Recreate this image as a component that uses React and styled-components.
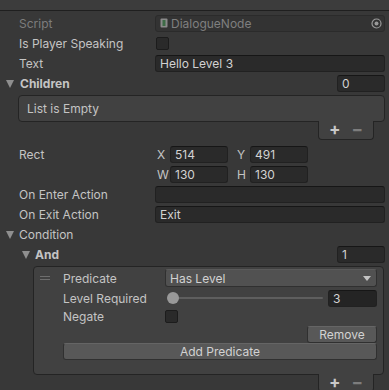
import React from 'react';
import styled, { createGlobalStyle } from 'styled-components';

const Global = createGlobalStyle`
  html, body { margin: 0; padding: 0; background: #383838; }
`;

const Page = styled.div`
  width: 389px;
  height: 390px;
  overflow: hidden;
  background: #383838;
  font-family: Inter, "Noto Sans", sans-serif;
  font-size: 12px;
  color: #c4c4c4;
`;

const TopBar = styled.div`
  height: 10px;
  background: #3c3c3c;
  border-bottom: 1px solid #1f1f1f;
`;

const Body = styled.div`
  display: flex;
  flex-direction: column;
  padding: 0 4px 0 0;
`;

const Row = styled.div`
  display: flex;
  align-items: center;
  height: 18px;
  margin-top: ${p => p.$mt ?? 2}px;
  flex: none;
`;

const Label = styled.div`
  position: relative;
  box-sizing: border-box;
  flex: none;
  width: ${p => p.$w ?? 155}px;
  padding-left: ${p => p.$indent ?? 19}px;
  color: ${p => (p.$dim ? '#7d7d7d' : '#c4c4c4')};
  font-weight: ${p => (p.$bold ? 700 : 400)};
  white-space: nowrap;
`;

const Arrow = styled.span`
  position: absolute;
  left: ${p => p.$left}px;
  top: 4px;
  width: 0;
  height: 0;
  border-left: 4px solid transparent;
  border-right: 4px solid transparent;
  border-top: 8px solid #8f8f8f;
`;

const Field = styled.div`
  box-sizing: border-box;
  flex: ${p => (p.$w ? 'none' : 1)};
  width: ${p => (p.$w ? `${p.$w}px` : 'auto')};
  margin-left: ${p => p.$ml ?? 0}px;
  height: 17px;
  display: flex;
  align-items: center;
  gap: 3px;
  padding: 0 4px;
  background: ${p => (p.$dark ? '#242424' : '#2a2a2a')};
  border: 1px solid #212121;
  border-top-color: #161616;
  border-radius: 3px;
  color: #d2d2d2;
  white-space: nowrap;
`;

const ObjectField = styled(Field)`
  background: #333333;
  border-color: #2b2b2b;
  color: #7f7f7f;
  padding-right: 2px;
`;

const Spacer = styled.div`
  flex: 1;
`;

const Check = styled.div`
  width: 13px;
  height: 13px;
  box-sizing: border-box;
  margin-left: ${p => p.$ml ?? 1}px;
  background: #2a2a2a;
  border: 1px solid #1c1c1c;
  border-radius: 2px;
`;

const ListBox = styled.div`
  margin: 3px 0 0 18px;
  height: 27px;
  box-sizing: border-box;
  background: #414141;
  border: 1px solid #242424;
  border-radius: 4px;
  display: flex;
  align-items: center;
  padding-left: 8px;
  color: #c4c4c4;
`;

const Footer = styled.div`
  align-self: flex-end;
  margin-right: ${p => p.$mr ?? 11}px;
  width: 56px;
  height: ${p => p.$h ?? 19}px;
  box-sizing: border-box;
  background: #414141;
  border: 1px solid #242424;
  border-top: none;
  border-radius: 0 0 4px 4px;
  display: flex;
  align-items: center;
  justify-content: center;
  gap: 11px;
  padding-bottom: 1px;
  font-size: 17px;
  font-weight: 700;
  line-height: 1;
  color: #c8c8c8;
  margin-top: -1px;
`;

const Minus = styled.span`
  color: #7d7d7d;
`;

const RectGroup = styled.div`
  display: flex;
  align-items: center;
  gap: 7px;
`;

const Axis = styled.div`
  display: flex;
  align-items: center;
  & > span {
    width: 15px;
    flex: none;
    color: #c4c4c4;
    padding-left: 2px;
    box-sizing: border-box;
  }
`;

const ElementBox = styled.div`
  margin: 3px 1px 0 33px;
  box-sizing: border-box;
  background: #414141;
  border: 1px solid #242424;
  border-radius: 4px;
  padding: 1px 6px 14px 0;
  display: flex;
  flex-direction: column;
`;

const Handle = styled.div`
  width: 29px;
  flex: none;
  display: flex;
  flex-direction: column;
  gap: 2px;
  padding-left: 6px;
  box-sizing: border-box;
  & > i {
    display: block;
    width: 10px;
    height: 1px;
    background: #6e6e6e;
  }
`;

const Dropdown = styled.div`
  flex: 1;
  height: 18px;
  box-sizing: border-box;
  display: flex;
  align-items: center;
  justify-content: space-between;
  padding: 0 5px 0 4px;
  background: #515151;
  border: 1px solid #303030;
  border-top-color: #5a5a5a;
  border-radius: 3px;
  color: #d2d2d2;
`;

const Caret = styled.span`
  width: 0;
  height: 0;
  border-left: 4px solid transparent;
  border-right: 4px solid transparent;
  border-top: 5px solid #c4c4c4;
`;

const Slider = styled.div`
  flex: 1;
  position: relative;
  height: 18px;
  margin-left: 1px;
  margin-right: 5px;
  &::before {
    content: '';
    position: absolute;
    left: 2px;
    right: 0;
    top: 8px;
    height: 2px;
    background: #5e5e5e;
    border-radius: 1px;
  }
`;

const Knob = styled.span`
  position: absolute;
  left: 1px;
  top: 3px;
  width: 12px;
  height: 12px;
  border-radius: 50%;
  background: #999999;
`;

const Button = styled.div`
  box-sizing: border-box;
  height: 17px;
  width: ${p => (p.$w ? `${p.$w}px` : 'auto')};
  align-self: ${p => (p.$right ? 'flex-end' : 'stretch')};
  margin-left: ${p => p.$ml ?? 0}px;
  margin-top: ${p => p.$mt ?? 0}px;
  display: flex;
  align-items: center;
  justify-content: center;
  background: #585858;
  border: 1px solid #303030;
  border-top-color: #656565;
  border-radius: 3px;
  color: #d2d2d2;
`;

const ScriptIcon = () => (
  <svg width="8" height="10" viewBox="0 0 8 10">
    <rect x="0.5" y="0.5" width="7" height="9" rx="1" fill="#8a8a8a" />
    <rect x="2.5" y="2" width="3" height="6" fill="#3d6b46" />
  </svg>
);

const TargetIcon = () => (
  <svg width="11" height="11" viewBox="0 0 11 11">
    <circle cx="5.5" cy="5.5" r="4.5" fill="none" stroke="#9a9a9a" strokeWidth="1.2" />
    <circle cx="5.5" cy="5.5" r="2" fill="#9a9a9a" />
  </svg>
);

const App = () => (
  <Page>
    <Global />
    <TopBar />
    <Body>
      <Row $mt={3}>
        <Label $dim>Script</Label>
        <ObjectField>
          <ScriptIcon />
          DialogueNode
          <Spacer />
          <TargetIcon />
        </ObjectField>
      </Row>
      <Row>
        <Label>Is Player Speaking</Label>
        <Check />
      </Row>
      <Row>
        <Label>Text</Label>
        <Field>Hello Level 3</Field>
      </Row>
      <Row>
        <Label $bold $indent={20}>
          <Arrow $left={6} />
          Children
        </Label>
        <Spacer />
        <Field $w={48}>0</Field>
      </Row>
      <ListBox>List is Empty</ListBox>
      <Footer>
        <span>+</span>
        <Minus>−</Minus>
      </Footer>
      <Row $mt={5}>
        <Label>Rect</Label>
        <RectGroup>
          <Axis><span>X</span><Field $w={58}>514</Field></Axis>
          <Axis><span>Y</span><Field $w={58}>491</Field></Axis>
        </RectGroup>
      </Row>
      <Row>
        <Label />
        <RectGroup>
          <Axis><span>W</span><Field $w={58}>130</Field></Axis>
          <Axis><span>H</span><Field $w={58}>130</Field></Axis>
        </RectGroup>
      </Row>
      <Row>
        <Label>On Enter Action</Label>
        <Field />
      </Row>
      <Row>
        <Label>On Exit Action</Label>
        <Field>Exit</Field>
      </Row>
      <Row>
        <Label $indent={19}>
          <Arrow $left={6} />
          Condition
        </Label>
      </Row>
      <Row>
        <Label $bold $indent={35}>
          <Arrow $left={22} />
          And
        </Label>
        <Spacer />
        <Field $w={48}>1</Field>
      </Row>
      <ElementBox>
        <Row $mt={1}>
          <Handle><i /><i /></Handle>
          <Label $w={102} $indent={0}>Predicate</Label>
          <Dropdown>
            Has Level
            <Caret />
          </Dropdown>
        </Row>
        <Row>
          <Handle />
          <Label $w={102} $indent={0}>Level Required</Label>
          <Slider><Knob /></Slider>
          <Field $w={49} $dark>3</Field>
        </Row>
        <Row $mt={0}>
          <Handle />
          <Label $w={102} $indent={0}>Negate</Label>
          <Check $ml={0} />
        </Row>
        <Button $w={70} $right $mt={1}>Remove</Button>
        <Button $ml={29}>Add Predicate</Button>
      </ElementBox>
      <Footer $h={18}>
        <span>+</span>
        <Minus>−</Minus>
      </Footer>
    </Body>
  </Page>
);

export default App;
